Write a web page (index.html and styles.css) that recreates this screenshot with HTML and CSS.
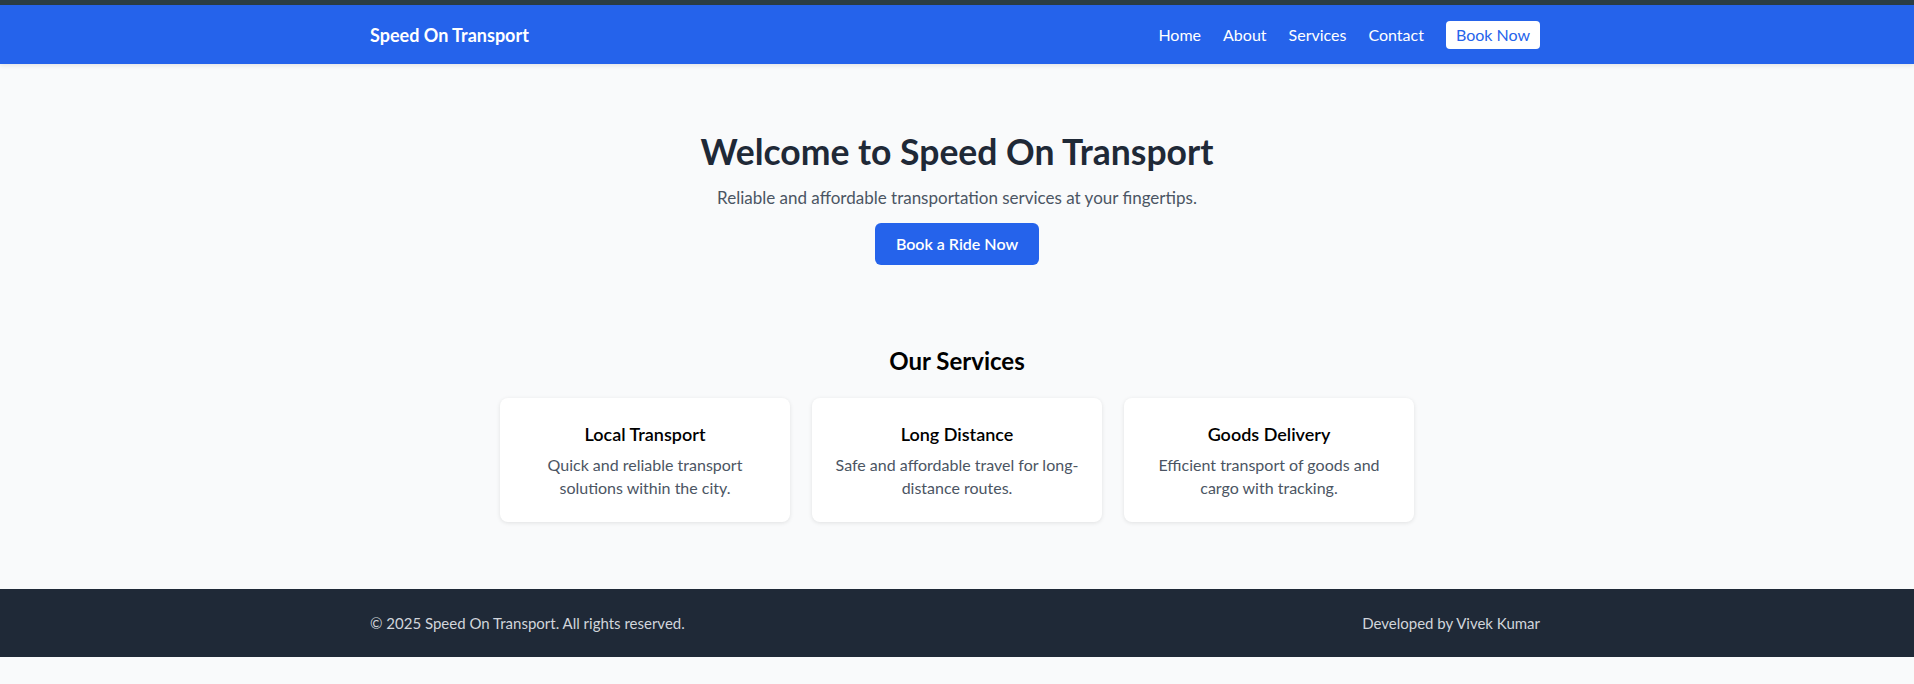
FILE: index.html
```html
<!DOCTYPE html>
<html lang="en">
<head>
<meta charset="utf-8">
<title>Speed On Transport</title>
<link rel="stylesheet" href="styles.css">
</head>
<body>
<div class="topband"></div>
<header class="site-header">
  <div class="container header-inner">
    <a class="logo" href="#">Speed On Transport</a>
    <nav class="nav">
      <a class="nav-link" href="#">Home</a>
      <a class="nav-link" href="#">About</a>
      <a class="nav-link" href="#">Services</a>
      <a class="nav-link" href="#">Contact</a>
      <a class="nav-btn" href="#">Book Now</a>
    </nav>
  </div>
</header>
<main>
  <section class="hero">
    <h1 class="hero-title">Welcome to Speed On Transport</h1>
    <p class="hero-sub">Reliable and affordable transportation services at your fingertips.</p>
    <a class="hero-btn" href="#">Book a Ride Now</a>
  </section>
  <section class="services">
    <h2 class="services-title">Our Services</h2>
    <div class="cards">
      <div class="card">
        <h3 class="card-title">Local Transport</h3>
        <p class="card-text">Quick and reliable transport solutions within the city.</p>
      </div>
      <div class="card">
        <h3 class="card-title">Long Distance</h3>
        <p class="card-text">Safe and affordable travel for long-distance routes.</p>
      </div>
      <div class="card">
        <h3 class="card-title">Goods Delivery</h3>
        <p class="card-text">Efficient transport of goods and cargo with tracking.</p>
      </div>
    </div>
  </section>
</main>
<footer class="site-footer">
  <div class="container footer-inner">
    <p class="footer-text">© 2025 Speed On Transport. All rights reserved.</p>
    <p class="footer-text">Developed by Vivek Kumar</p>
  </div>
</footer>
</body>
</html>
```

FILE: styles.css
```css
* { box-sizing: border-box; }
html, body { margin: 0; padding: 0; }
body {
  background: #f9fafb;
  font-family: Lato, "Noto Sans", sans-serif;
  color: #1f2937;
}
a { text-decoration: none; }
p, h1, h2, h3 { margin: 0; }

.container {
  width: 1174px;
  padding-right: 4px;
  margin: 0 auto;
}

.topband { height: 5px; background: #2b3d44; }

.site-header {
  background: #2563eb;
  height: 59px;
  box-shadow: 0 2px 4px rgba(0,0,0,0.08);
}
.header-inner {
  height: 100%;
  display: flex;
  align-items: center;
  justify-content: space-between;
}
.logo {
  color: #fff;
  font-weight: 700;
  font-size: 18px;
}
.nav {
  display: flex;
  align-items: center;
  gap: 22px;
}
.nav-link {
  color: #fff;
  font-size: 16px;
}
.nav-btn {
  background: #fff;
  color: #2563eb;
  font-size: 16px;
  line-height: 20px;
  padding: 4px 10px;
  border-radius: 4px;
}

.hero {
  display: flex;
  flex-direction: column;
  align-items: center;
  padding-top: 68px;
}
.hero-title {
  font-size: 35.5px;
  line-height: 40px;
  font-weight: 700;
  color: #1f2937;
}
.hero-sub {
  margin-top: 12px;
  font-size: 17px;
  line-height: 28px;
  color: #4b5563;
}
.hero-btn {
  margin-top: 11px;
  background: #2563eb;
  color: #fff;
  font-weight: 600;
  font-size: 16px;
  line-height: 24px;
  padding: 9px 21px;
  border-radius: 6px;
}

.services {
  display: flex;
  flex-direction: column;
  align-items: center;
  padding-top: 80px;
  padding-bottom: 67px;
}
.services-title {
  font-size: 24px;
  line-height: 32px;
  font-weight: 700;
  color: #000;
}
.cards {
  margin-top: 21px;
  display: flex;
  gap: 22px;
}
.card {
  width: 290px;
  background: #fff;
  border-radius: 8px;
  box-shadow: 0 1px 4px rgba(0,0,0,0.1);
  padding: 23px 20px 23px;
  text-align: center;
}
.card-title {
  font-size: 18px;
  line-height: 26px;
  font-weight: 600;
  color: #000;
}
.card-text {
  margin-top: 6px;
  font-size: 16px;
  line-height: 23px;
  color: #4b5563;
}

.site-footer {
  background: #1f2937;
  padding: 24px 0;
}
.footer-inner {
  display: flex;
  justify-content: space-between;
  align-items: center;
}
.footer-text {
  color: #d1d5db;
  font-size: 15px;
  line-height: 20px;
}
```
